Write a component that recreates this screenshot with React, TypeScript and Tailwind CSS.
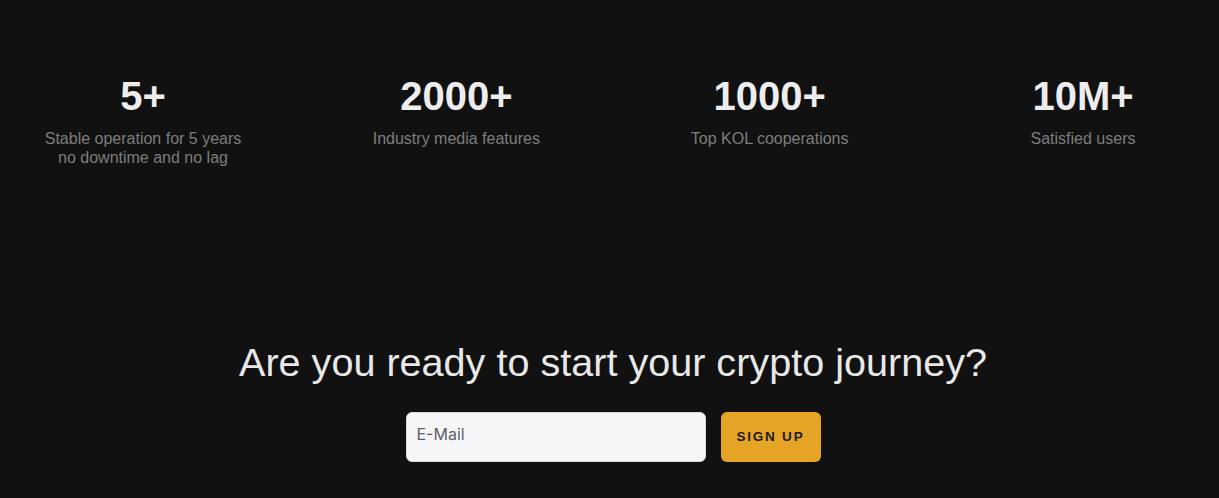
import React from 'react';

const stats = [
  { value: '5+', label: ['Stable operation for 5 years', 'no downtime and no lag'] },
  { value: '2000+', label: ['Industry media features'] },
  { value: '1000+', label: ['Top KOL cooperations'] },
  { value: '10M+', label: ['Satisfied users'] },
];

export default function App() {
  return (
    <div className="w-full min-h-screen bg-[#111111] font-['Liberation_Sans',Arial,sans-serif] overflow-hidden">
      {/* Stats row */}
      <section className="flex justify-between pl-[43px] pr-[36px] pt-[72px]">
        {stats.map((s) => (
          <div key={s.value} className="w-[200px] text-center">
            <div className="text-[40px] leading-[48px] font-bold text-[#ededed]">{s.value}</div>
            <div className="mt-[9px] text-[16px] leading-[19px] text-[#7d7d7d]">
              {s.label.map((line) => (
                <div key={line}>{line}</div>
              ))}
            </div>
          </div>
        ))}
      </section>

      {/* Sign up call to action */}
      <section className="mt-[171px] pl-[7px] flex flex-col items-center">
        <h2 className="text-[39.6px] leading-[48px] text-[#e8e8e8]">Are you ready to start your crypto journey?</h2>
        <form className="mt-[26px] flex gap-[15px]" onSubmit={(e) => e.preventDefault()}>
          <input
            type="email"
            placeholder="E-Mail"
            className="w-[300px] h-[50px] rounded-md border border-[#d5d8dd] bg-[#f5f6f8] px-[10px] pb-[7px] font-['Inter',sans-serif] text-[16px] text-[#333] placeholder:text-[#5e6068] outline-none"
          />
          <button
            type="submit"
            className="w-[100px] h-[50px] rounded-md bg-[#e6a427] text-[13.5px] font-bold tracking-[0.13em] text-[#1c1a16]"
          >
            SIGN UP
          </button>
        </form>
      </section>
    </div>
  );
}
